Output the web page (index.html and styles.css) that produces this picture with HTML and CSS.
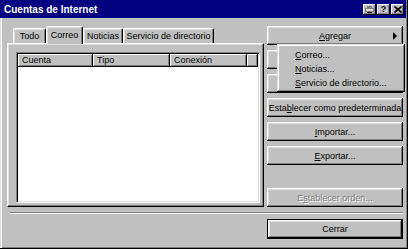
FILE: index.html
```html
<!DOCTYPE html>
<html>
<head>
<meta charset="utf-8">
<link rel="stylesheet" href="styles.css">
</head>
<body>
<div class="window">
  <div class="titlebar">
    <span class="title">Cuentas de Internet</span>
    <div class="tbtns">
      <span class="tbtn">
        <svg width="9" height="7" viewBox="0 0 9 7"><rect x="2" y="0" width="5" height="2" fill="#808080"/><rect x="0" y="2" width="9" height="4" fill="#808080"/><rect x="1" y="3" width="7" height="2" fill="#dfdfdf"/><rect x="2" y="6" width="5" height="1" fill="#000"/></svg>
      </span>
      <span class="tbtn tq">?</span>
      <span class="tbtn">
        <svg width="8" height="7" viewBox="0 0 8 7"><path d="M0.5 0.5 L7.5 6.5 M7.5 0.5 L0.5 6.5" stroke="#000" stroke-width="1.6" fill="none"/></svg>
      </span>
    </div>
  </div>
  <div class="content">
    <div class="top">
      <div class="left">
        <div class="tabs">
          <div class="tab tab-todo">Todo</div>
          <div class="tab tab-correo sel">Correo</div>
          <div class="tab tab-noticias">Noticias</div>
          <div class="tab tab-servicio">Servicio de directorio</div>
        </div>
        <div class="panel">
          <div class="list">
            <div class="header">
              <div class="hcol c1">Cuenta</div>
              <div class="hcol c2">Tipo</div>
              <div class="hcol c3">Conexión</div>
              <div class="hcol c4"></div>
            </div>
          </div>
        </div>
      </div>
      <div class="right">
        <div class="btn arrowbtn"><span><u>A</u>gregar</span><span class="arrow"></span></div>
        <div class="btn"></div>
        <div class="btn"></div>
        <div class="btn">Esta<u>b</u>lecer como predeterminada</div>
        <div class="btn"><u>I</u>mportar...</div>
        <div class="btn"><u>E</u>xportar...</div>
        <div class="btn disabled pushdown">E<u>s</u>tablecer orden...</div>
        <div class="menu">
          <div class="mi"><span><u>C</u>orreo...</span></div>
          <div class="mi"><span><u>N</u>oticias...</span></div>
          <div class="mi"><span><u>S</u>ervicio de directorio...</span></div>
        </div>
      </div>
    </div>
    <div class="sep"></div>
    <div class="bottom">
      <div class="btn default">Cerrar</div>
    </div>
  </div>
</div>
</body>
</html>
```

FILE: styles.css
```css
* { box-sizing: border-box; }
html, body { margin: 0; padding: 0; }
body {
  width: 408px;
  height: 249px;
  overflow: hidden;
  background: #c0c0c0;
  font-family: "Liberation Sans", Arial, sans-serif;
  font-size: 9px;
  color: #000;
}
.window {
  width: 408px;
  height: 249px;
  display: flex;
  flex-direction: column;
  background: #c0c0c0;
  border-right: 1px solid #000;
  border-bottom: 1px solid #000;
  box-shadow: inset -1px -1px #808080;
}
.titlebar {
  height: 18px;
  margin-right: 1px;
  background: #000080;
  color: #fff;
  display: flex;
  align-items: center;
  padding-left: 4px;
}
.title {
  font-weight: bold;
  font-size: 10px;
}
.tbtns {
  margin-left: auto;
  margin-right: 2px;
  display: flex;
  gap: 1px;
}
.tbtn {
  width: 13px;
  height: 11px;
  background: #c0c0c0;
  box-shadow: inset -1px -1px #000, inset 1px 1px #fff, inset -2px -2px #808080;
  display: flex;
  align-items: center;
  justify-content: center;
  color: #000;
}
.tq {
  font-weight: bold;
  font-size: 9px;
  line-height: 1;
}
.content {
  flex: 1;
  padding: 8px 4px 0 7px;
  box-shadow: inset 1px 0 #dfdfdf, inset 2px 0 #fff;
}
.top {
  display: flex;
  gap: 3px;
  height: 181px;
}
.left {
  width: 257px;
  display: flex;
  flex-direction: column;
}
.tabs {
  height: 17px;
  display: flex;
  align-items: flex-end;
  padding-left: 6px;
  position: relative;
  z-index: 1;
}
.tab {
  height: 15px;
  display: flex;
  align-items: center;
  justify-content: center;
  background: #c0c0c0;
  border-top: 1px solid #fff;
  border-left: 1px solid #fff;
  border-right: 1px solid #000;
  border-radius: 2px 2px 0 0;
  box-shadow: inset -1px 0 #808080, inset 1px 1px #dfdfdf;
  white-space: nowrap;
}
.tab.sel {
  height: 18px;
  margin-bottom: -1px;
  padding-bottom: 2px;
}
.tab-todo { width: 33px; }
.tab-correo { width: 37px; }
.tab-noticias { width: 40px; }
.tab-servicio { width: 91px; }
.panel {
  flex: 1;
  background: #c0c0c0;
  border-top: 1px solid #fff;
  border-left: 1px solid #fff;
  border-right: 1px solid #000;
  border-bottom: 1px solid #000;
  box-shadow: inset -1px -1px #808080, inset 1px 1px #dfdfdf;
  padding: 8px 0 0 8px;
}
.list {
  width: 244px;
  height: 151px;
  background: #fff;
  border: 1px solid;
  border-color: #808080 #fff #fff #808080;
  box-shadow: inset 1px 1px #000, inset -1px -1px #dfdfdf;
  padding: 1px;
}
.header {
  display: flex;
  height: 13px;
}
.hcol {
  background: #c0c0c0;
  border-right: 1px solid #000;
  border-bottom: 1px solid #000;
  box-shadow: inset 1px 1px #fff, inset -1px -1px #808080;
  padding-left: 4px;
  display: flex;
  align-items: center;
}
.c1 { width: 75px; }
.c2 { width: 77px; }
.c3 { width: 77px; }
.c4 { flex: 1; }
.right {
  width: 136px;
  display: flex;
  flex-direction: column;
  gap: 5px;
  position: relative;
}
.btn {
  height: 19px;
  flex: none;
  display: flex;
  align-items: center;
  justify-content: center;
  background: #c0c0c0;
  box-shadow: inset -1px -1px #000, inset 1px 1px #fff, inset -2px -2px #808080, inset 2px 2px #dfdfdf;
  white-space: nowrap;
}
.arrowbtn { position: relative; }
.arrow {
  position: absolute;
  right: 6px;
  top: 6px;
  width: 0;
  height: 0;
  border-left: 4px solid #000;
  border-top: 4px solid transparent;
  border-bottom: 4px solid transparent;
}
.disabled {
  color: #808080;
  text-shadow: 1px 1px #fff;
}
.pushdown { margin-top: auto; }
.menu {
  position: absolute;
  left: 10px;
  top: 18px;
  width: 128px;
  height: 48px;
  z-index: 2;
  background: #c0c0c0;
  box-shadow: inset -1px -1px #000, inset 1px 1px #dfdfdf, inset -2px -2px #808080, inset 2px 2px #fff;
  padding: 4px 2px 2px 2px;
}
.mi {
  height: 14px;
  display: flex;
  align-items: center;
  padding-left: 16px;
  white-space: nowrap;
}
.sep {
  margin: 5px 0 0 3px;
  height: 2px;
  border-top: 1px solid #808080;
  border-bottom: 1px solid #fff;
}
.bottom {
  display: flex;
  justify-content: flex-end;
  margin-top: 5px;
}
.btn.default {
  width: 136px;
  height: 20px;
  border: 1px solid #000;
}
```
